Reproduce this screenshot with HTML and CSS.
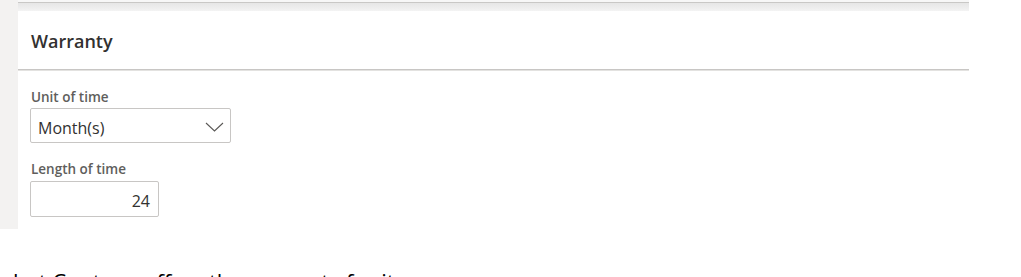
FILE: index.html
```html
<!DOCTYPE html>
<html lang="en">
<head>
<meta charset="utf-8">
<title>Warranty</title>
<link rel="stylesheet" href="styles.css">
</head>
<body>
<div class="shot">
  <div class="rail"></div>
  <div class="panel">
    <div class="topband"></div>
    <div class="header">Warranty</div>
    <div class="fields">
      <div class="label">Unit of time</div>
      <div class="select">
        <span class="select-value">Month(s)</span>
        <svg class="chevron" width="19" height="10" viewBox="0 0 19 10" aria-hidden="true">
          <polyline points="1,1 9.5,9 18,1" fill="none" stroke="#5a5856" stroke-width="1.1"/>
        </svg>
      </div>
      <div class="label label-gap">Length of time</div>
      <div class="input">24</div>
    </div>
  </div>
</div>
<p class="caption">hat Contoso offers the warranty for it</p>
</body>
</html>
```

FILE: styles.css
```css
html, body {
  margin: 0;
  padding: 0;
  background: #ffffff;
  overflow: hidden;
}

body {
  font-family: "Open Sans", "Noto Sans", "Liberation Sans", sans-serif;
  color: #323130;
}

.shot {
  display: flex;
  align-items: flex-start;
  width: 969px;
}

.rail {
  width: 18px;
  height: 229px;
  flex: none;
  background: #f3f2f1;
}

.panel {
  flex: 1;
  background: #ffffff;
}

.topband {
  height: 11px;
  background: linear-gradient(to bottom,
    #f7f7f7 0px, #f7f7f7 2px,
    #c9c8c6 2px, #c9c8c6 3px,
    #e6e6e6 3px, #f3f3f3 11px);
}

.header {
  height: 59px;
  box-sizing: border-box;
  padding: 18px 0 0 13px;
  font-size: 18px;
  line-height: 24px;
  font-weight: 600;
  color: #323130;
  border-bottom: 1px solid #c8c6c4;
  box-shadow: 0 1px 0 #e3e2e0;
}

.fields {
  padding: 19px 0 0 12px;
  display: flex;
  flex-direction: column;
  align-items: flex-start;
}

.label {
  font-size: 13.5px;
  line-height: 16px;
  font-weight: 600;
  color: #605e5c;
  padding-left: 1px;
}

.label-gap {
  margin-top: 18px;
}

.select {
  margin-top: 3px;
  width: 201px;
  height: 35px;
  box-sizing: border-box;
  border: 1px solid #c8c6c4;
  border-radius: 2px;
  display: flex;
  align-items: center;
  justify-content: space-between;
  padding: 0 6px 0 7px;
}

.select-value {
  font-size: 16px;
  line-height: 29px;
  padding-top: 6px;
  color: #323130;
}

.chevron {
  display: block;
  margin-top: 3px;
}

.input {
  margin-top: 4px;
  width: 129px;
  height: 36px;
  box-sizing: border-box;
  border: 1px solid #c8c6c4;
  border-radius: 2px;
  padding: 5px 8px 0 8px;
  font-size: 16px;
  line-height: 29px;
  text-align: right;
  color: #323130;
}

.caption {
  margin: 38px 0 0 13px;
  font-size: 22px;
  line-height: 28px;
  color: #000000;
  white-space: nowrap;
}
```
